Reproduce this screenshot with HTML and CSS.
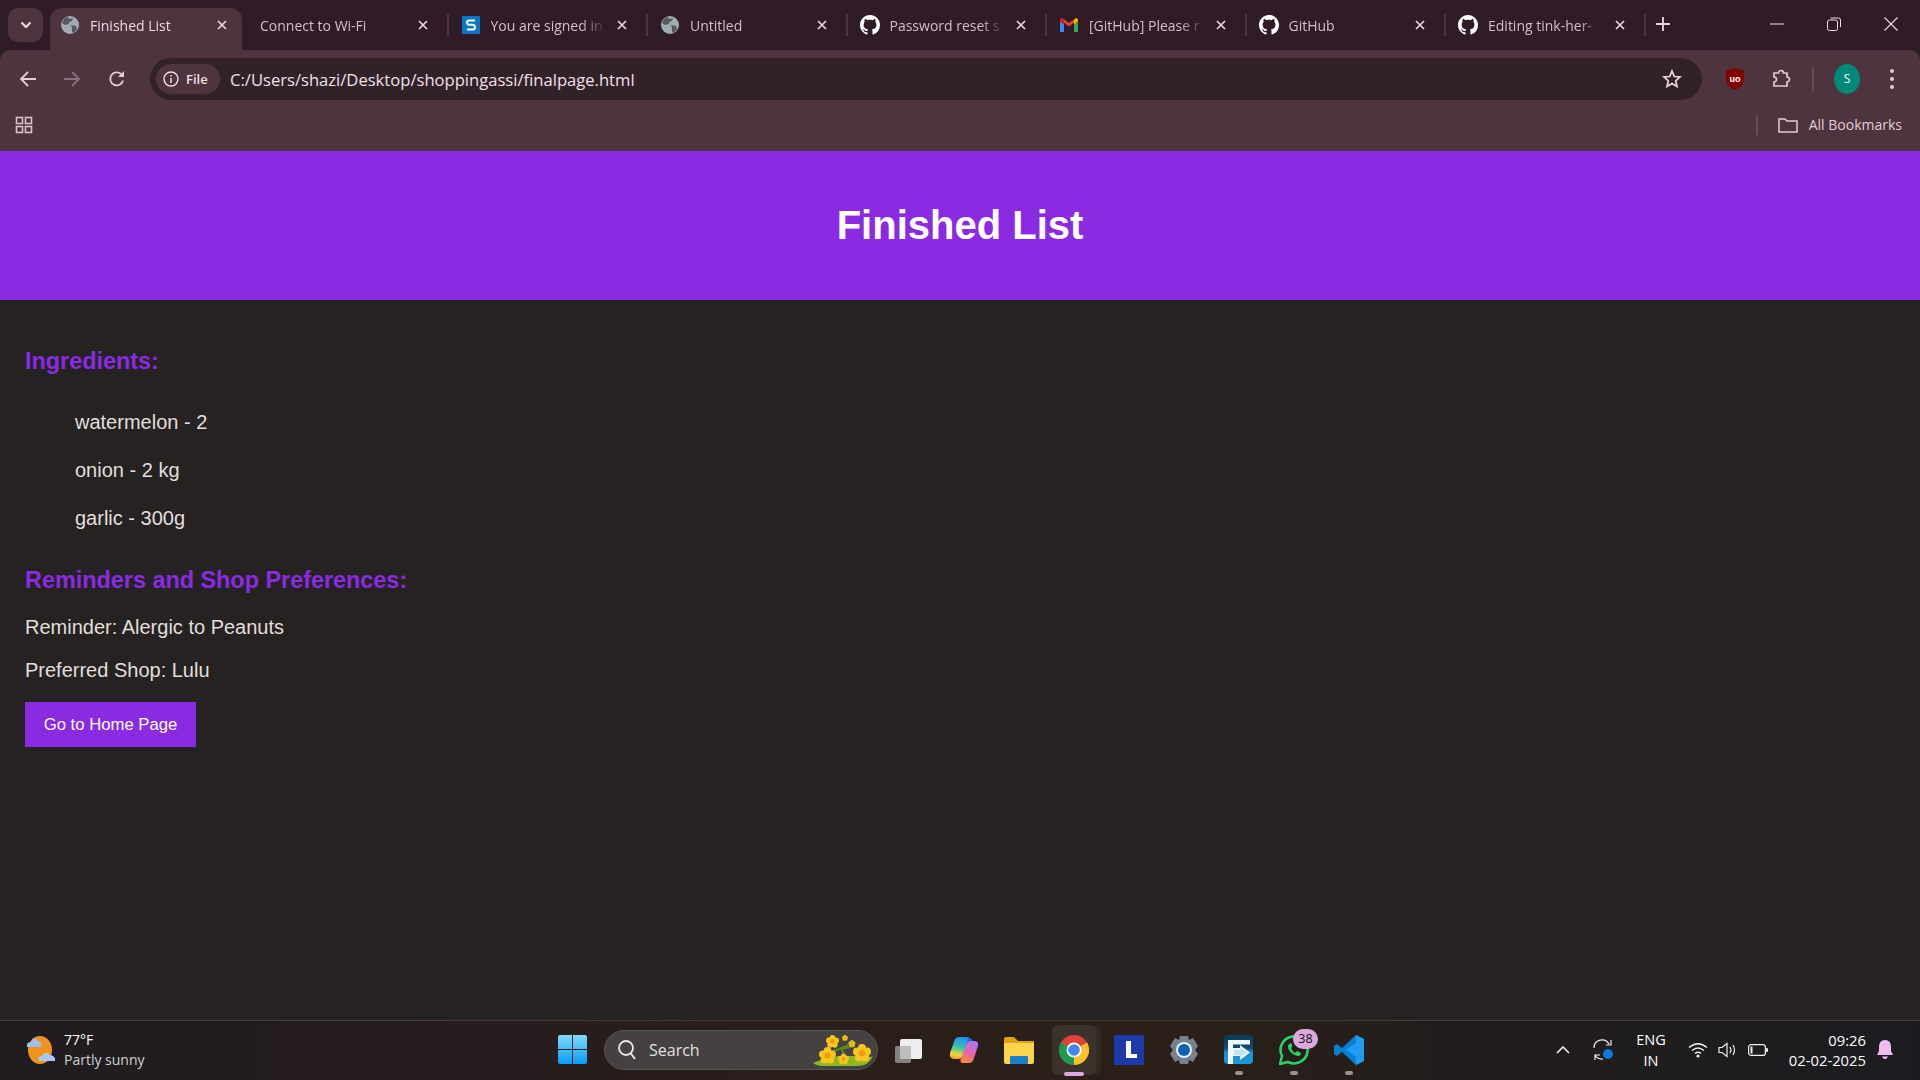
FILE: index.html
```html
<!DOCTYPE html>
<html lang="en">
<head>
    <meta charset="UTF-8">
    <title>Finished List</title>
    <link rel="stylesheet" href="styles.css">
</head>
<body>
    <svg class="defs" width="0" height="0">
        <defs>
            <symbol id="globe" viewBox="0 0 18 18">
                <circle cx="9" cy="9" r="9" fill="#a3abb3"/>
                <path d="M6 1 9 3 12 2 11 5 8 6 8 8 4 9 1 7 3 3ZM10 9 15 10 16 13 13 17 11 16 11 12Z" fill="#55595f"/>
            </symbol>
            <symbol id="github" viewBox="0 0 16 16">
                <path fill="#fff" d="M8 0C3.58 0 0 3.58 0 8c0 3.54 2.29 6.53 5.47 7.59.4.07.55-.17.55-.38 0-.19-.01-.82-.01-1.49-2.01.37-2.53-.49-2.69-.94-.09-.23-.48-.94-.82-1.13-.28-.15-.68-.52-.01-.53.63-.01 1.08.58 1.23.82.72 1.21 1.87.87 2.33.66.07-.52.28-.87.51-1.07-1.78-.2-3.64-.89-3.64-3.95 0-.87.31-1.59.82-2.15-.08-.2-.36-1.02.08-2.12 0 0 .67-.21 2.2.82.64-.18 1.32-.27 2-.27.68 0 1.36.09 2 .27 1.53-1.04 2.2-.82 2.2-.82.44 1.1.16 1.92.08 2.12.51.56.82 1.27.82 2.15 0 3.07-1.87 3.75-3.65 3.95.29.25.54.73.54 1.48 0 1.07-.01 1.93-.01 2.2 0 .21.15.46.55.38A8.013 8.013 0 0016 8c0-4.42-3.58-8-8-8z"/>
            </symbol>
            <symbol id="close" viewBox="0 0 12 12">
                <path d="M2 2 10 10M10 2 2 10" stroke="#ecd5df" stroke-width="1.7" fill="none"/>
            </symbol>
            <symbol id="blossom" viewBox="0 0 20 20">
                <g fill="#f7c51e">
                    <circle cx="10" cy="4.500" r="4.500"/><circle cx="15.500" cy="8.500" r="4.500"/><circle cx="13.500" cy="15" r="4.500"/>
                    <circle cx="6.500" cy="15" r="4.500"/><circle cx="4.500" cy="8.500" r="4.500"/>
                </g>
                <circle cx="10" cy="10" r="3.500" fill="#ee9a14"/>
            </symbol>
        </defs>
    </svg>

    <!-- tab strip -->
    <div class="tabstrip">
        <button class="tab-search">
            <svg width="12" height="8" viewBox="0 0 12 8"><path d="M1.5 1.5 6 6 10.500 1.500" stroke="#f0e0e8" stroke-width="2" fill="none"/></svg>
        </button>
        <div class="tab active">
            <svg class="favicon"><use href="#globe"/></svg>
            <span class="tab-title">Finished List</span>
            <svg class="tab-close"><use href="#close"/></svg>
        </div>
        <div class="tab no-icon">
            <span class="tab-title">Connect to Wi-Fi</span>
            <svg class="tab-close"><use href="#close"/></svg>
        </div>
        <div class="tab">
            <svg class="favicon" viewBox="0 0 18 18">
                <rect width="18" height="18" fill="#0a76c4"/>
                <path d="M13 4.500H7.500Q5 4.500 5 6.500T7.500 8.800H10.500Q13 9 13 11.200T10.500 13.500H5" stroke="#fff" stroke-width="2" fill="none"/>
            </svg>
            <span class="tab-title">You are signed in</span>
            <svg class="tab-close"><use href="#close"/></svg>
        </div>
        <div class="tab">
            <svg class="favicon"><use href="#globe"/></svg>
            <span class="tab-title">Untitled</span>
            <svg class="tab-close"><use href="#close"/></svg>
        </div>
        <div class="tab">
            <svg class="favicon gh"><use href="#github"/></svg>
            <span class="tab-title">Password reset s</span>
            <svg class="tab-close"><use href="#close"/></svg>
        </div>
        <div class="tab">
            <svg class="favicon" viewBox="0 0 18 14">
                <path d="M0 3V14H4V6.500Z" fill="#4285f4"/>
                <path d="M14 6.500V14H18V3Z" fill="#34a853"/>
                <path d="M0 1.500 9 8.500 18 1.500 16 0 9 5 2 0Z" fill="#ea4335"/>
                <path d="M14 2.500 16 0 18 1.500V3L14 6.500Z" fill="#fbbc04"/>
                <path d="M0 1.500 2 0 4 2.500V6.500L0 3Z" fill="#c5221f"/>
            </svg>
            <span class="tab-title">[GitHub] Please r</span>
            <svg class="tab-close"><use href="#close"/></svg>
        </div>
        <div class="tab">
            <svg class="favicon gh"><use href="#github"/></svg>
            <span class="tab-title">GitHub</span>
            <svg class="tab-close"><use href="#close"/></svg>
        </div>
        <div class="tab last">
            <svg class="favicon gh"><use href="#github"/></svg>
            <span class="tab-title">Editing tink-her-</span>
            <svg class="tab-close"><use href="#close"/></svg>
        </div>
        <button class="new-tab">
            <svg width="14" height="14" viewBox="0 0 14 14"><path d="M7 0V14M0 7H14" stroke="#ecd5df" stroke-width="1.800"/></svg>
        </button>
        <div class="window-controls">
            <svg width="14" height="14" viewBox="0 0 14 14"><path d="M0 7H14" stroke="#f0e0e8"/></svg>
            <svg width="14" height="14" viewBox="0 0 14 14"><rect x="0.500" y="3" width="10" height="10.500" rx="2" stroke="#f0e0e8" fill="none"/><path d="M3.500 1H11.500Q13.500 1 13.500 3V10" stroke="#f0e0e8" fill="none"/></svg>
            <svg width="14" height="14" viewBox="0 0 14 14"><path d="M0.500 0.500 13.500 13.500M13.500 0.500 0.500 13.500" stroke="#f0e0e8" stroke-width="1.100"/></svg>
        </div>
    </div>

    <!-- address bar -->
    <div class="toolbar">
        <button class="tool-btn">
            <svg width="18" height="18" viewBox="0 0 18 18"><path d="M17 9H2M9 2 2 9 9 16" stroke="#e3ccd6" stroke-width="1.800" fill="none"/></svg>
        </button>
        <button class="tool-btn">
            <svg width="18" height="18" viewBox="0 0 18 18"><path d="M1 9H16M9 2 16 9 9 16" stroke="#87707b" stroke-width="1.800" fill="none"/></svg>
        </button>
        <button class="tool-btn reload">
            <svg width="18" height="18" viewBox="0 0 18 18"><path d="M15 10.500A6.500 6.500 0 1 1 13 4L15 6" stroke="#e3ccd6" stroke-width="1.800" fill="none"/><path d="M16 1V7H10Z" fill="#e3ccd6"/></svg>
        </button>
        <div class="omnibox">
            <div class="file-chip">
                <svg width="16" height="16" viewBox="0 0 16 16"><circle cx="8" cy="8" r="7" stroke="#f0e0e8" stroke-width="1.400" fill="none"/><path d="M8 7V12M8 4V5.600" stroke="#f0e0e8" stroke-width="1.500"/></svg>
                <span>File</span>
            </div>
            <span class="url">C:/Users/shazi/Desktop/shoppingassi/finalpage.html</span>
            <svg class="star" width="20" height="20" viewBox="0 0 20 20"><path d="M10 2 12.300 7.500 18 8 13.700 11.800 15 17.500 10 14.500 5 17.500 6.300 11.800 2 8 7.700 7.500Z" stroke="#ecd5df" stroke-width="1.700" fill="none"/></svg>
        </div>
        <div class="ext">
            <svg width="18" height="22" viewBox="0 0 18 22"><path d="M9 0 18 3V11Q18 18 9 22 0 18 0 11V3Z" fill="#800000"/><text x="9" y="13.500" class="ublock">uo</text></svg>
        </div>
        <div class="ext">
            <svg width="20" height="20" viewBox="0 0 20 20"><path d="M3 4H7.500A2.500 2.500 0 0 1 12.500 4H16V8A2.500 2.500 0 0 1 16 13V17H3V13A2.500 2.500 0 0 0 3 8Z" stroke="#e3ccd6" stroke-width="1.700" fill="none"/></svg>
        </div>
        <span class="tool-sep"></span>
        <div class="avatar">S</div>
        <div class="menu-dots"><i></i><i></i><i></i></div>
    </div>

    <!-- bookmarks bar -->
    <div class="bookmarks">
        <svg width="18" height="18" viewBox="0 0 18 18" class="apps">
            <g stroke="#d8c2cc" stroke-width="1.600" fill="none">
                <rect x="1.500" y="1.500" width="6" height="6"/><rect x="10.500" y="1.500" width="6" height="6"/>
                <rect x="1.500" y="10.500" width="6" height="6"/><rect x="10.500" y="10.500" width="6" height="6"/>
            </g>
        </svg>
        <span class="bm-sep"></span>
        <svg width="20" height="16" viewBox="0 0 20 16"><path d="M1 14V2H7L9 4H19V15H1Z" stroke="#e3ccd6" stroke-width="1.500" fill="none"/></svg>
        <span class="bm-label">All Bookmarks</span>
    </div>

    <!-- page -->
    <header class="page-header">
        <h1>Finished List</h1>
    </header>
    <main class="content">
        <h2>Ingredients:</h2>
        <ul class="items">
            <li>watermelon - 2</li>
            <li>onion - 2 kg</li>
            <li>garlic - 300g</li>
        </ul>
        <h2>Reminders and Shop Preferences:</h2>
        <p>Reminder: Alergic to Peanuts</p>
        <p>Preferred Shop: Lulu</p>
        <button class="home-btn">Go to Home Page</button>
    </main>

    <!-- taskbar -->
    <footer class="taskbar">
        <div class="weather">
            <svg width="31" height="30" viewBox="0 0 31 30">
                <ellipse cx="15" cy="15" rx="12" ry="14" fill="#f0931c"/>
                <path d="M2 12Q1 7 6 7 9 0 13 6 18 7 16 12Z" fill="#9fc0ee"/>
                <path d="M14 26Q12 21 17 21 21 15 25 20 31 21 30 26Z" fill="#a9c8f2"/>
            </svg>
            <div class="weather-text">
                <span class="temp">77°F</span>
                <span class="cond">Partly sunny</span>
            </div>
        </div>
        <svg class="start" width="29" height="29" viewBox="0 0 29 29">
            <defs>
                <linearGradient id="win" x1="0" y1="0" x2="0" y2="1"><stop offset="0" stop-color="#7fdcfb"/><stop offset="1" stop-color="#0a9cf5"/></linearGradient>
            </defs>
            <path d="M0 2Q0 0 2 0H14V14H0ZM15 0H27Q29 0 29 2V14H15ZM0 15H14V29H2Q0 29 0 27ZM15 15H29V27Q29 29 27 29H15Z" fill="url(#win)"/>
        </svg>
        <div class="search">
            <svg width="20" height="22" viewBox="0 0 20 22"><circle cx="9" cy="9" r="7" stroke="#e8e8e8" stroke-width="1.800" fill="none"/><path d="M13.500 14 18 20" stroke="#e8e8e8" stroke-width="2"/></svg>
            <span>Search</span>
            <svg class="flowers" width="62" height="32" viewBox="0 0 62 32">
                <path d="M0 29Q20 20 40 22T60 22Q56 32 44 32H10Q4 32 0 29Z" fill="#8db822"/>
                <path d="M18 18 34 12 38 7M28 15 34 24M28 15 42 12" stroke="#5c8a1c" stroke-width="2" fill="none"/>
                <use href="#blossom" x="6" y="13" width="17" height="17"/>
                <use href="#blossom" x="13" y="1" width="13" height="13"/>
                <use href="#blossom" x="40" y="10" width="18" height="18"/>
                <use href="#blossom" x="25" y="19" width="11" height="12"/>
                <use href="#blossom" x="29" y="0" width="6" height="8"/>
                <use href="#blossom" x="35" y="6" width="8" height="7"/>
            </svg>
        </div>
        <div class="apps-row">
            <div class="app">
                <svg width="30" height="30" viewBox="0 0 30 30"><rect x="6" y="4" width="22" height="20" rx="2" fill="#eeeeee"/><rect x="1" y="11" width="16" height="17" rx="2" fill="#8d8d8d" opacity=".9"/><rect x="6" y="11" width="11" height="13" fill="#bdbdbd"/></svg>
            </div>
            <div class="app">
                <svg width="30" height="28" viewBox="0 0 30 28">
                    <defs>
                        <linearGradient id="cpA" x1="0.500" y1="0" x2="0.300" y2="1"><stop offset="0" stop-color="#2a8cf0"/><stop offset=".45" stop-color="#35c6a8"/><stop offset=".8" stop-color="#f0d23a"/><stop offset="1" stop-color="#f0a030"/></linearGradient>
                        <linearGradient id="cpB" x1="0.700" y1="0" x2="0.300" y2="1"><stop offset="0" stop-color="#a878f0"/><stop offset=".5" stop-color="#e860b8"/><stop offset="1" stop-color="#f58a3c"/></linearGradient>
                    </defs>
                    <path d="M19 1Q23 2 24 6L13 6Q10 6 9 9Z" fill="#2466d8"/>
                    <path d="M10 1H17Q20 1 19 4L14 19Q13 23 9 23H6Q0 23 1 17L5 6Q6 1 10 1Z" fill="url(#cpA)"/>
                    <path d="M11 22Q14 24 17 21L20 20 17 27H14Q11 27 11 22Z" fill="#e8383c"/>
                    <path d="M20 27H14Q11 27 12 24L17 9Q18 5 22 5H25Q30 5 29 10L25 22Q24 27 20 27Z" fill="url(#cpB)"/>
                </svg>
            </div>
            <div class="app">
                <svg width="30" height="28" viewBox="0 0 30 28"><path d="M0 3Q0 1 2 1H10L14 5H30V12H0Z" fill="#e2a312"/><path d="M0 7H30V26Q30 28 28 28H2Q0 28 0 26Z" fill="#fcd34c"/><rect x="6" y="20" width="18" height="8" rx="1" fill="#1a7fc9"/></svg>
            </div>
            <div class="app running">
                <svg width="30" height="30" viewBox="0 0 30 30">
                    <circle cx="15" cy="15" r="15" fill="#db4437"/>
                    <path d="M15 15 2 7.500A15 15 0 0 0 15 30Z" fill="#1c9a4f"/>
                    <path d="M15 15 15 30A15 15 0 0 0 28 7.500Z" fill="#fbc02d"/>
                    <circle cx="15" cy="15" r="7.500" fill="#fff"/>
                    <circle cx="15" cy="15" r="5.800" fill="#4285f4"/>
                </svg>
            </div>
            <div class="app">
                <svg width="30" height="30" viewBox="0 0 30 30"><rect width="30" height="30" fill="#1e3aa8"/><path d="M12 6H17V19H23V23H12Z" fill="#fff"/></svg>
            </div>
            <div class="app">
                <svg width="30" height="30" viewBox="0 0 30 30"><path d="M11 1H19L20 5 24 3 29 11 26 15 29 19 24 27 20 25 19 29H11L10 25 6 27 1 19 4 15 1 11 6 3 10 5Z" fill="#75818d"/><circle cx="15" cy="15" r="8" fill="#e8eef4"/><circle cx="15" cy="15" r="6" fill="#0f62b0"/></svg>
            </div>
            <div class="app dot">
                <svg width="29" height="29" viewBox="0 0 29 29">
                    <defs>
                        <linearGradient id="rem" x1="0" y1="0" x2="0" y2="1"><stop offset="0" stop-color="#0c3b58"/><stop offset=".45" stop-color="#0c4c70"/><stop offset=".6" stop-color="#1c8fd0"/><stop offset="1" stop-color="#1c9adf"/></linearGradient>
                    </defs>
                    <rect width="29" height="29" rx="4" fill="url(#rem)"/>
                    <path d="M4 29V5H26V9.500H9V13H16V10L26 17.500 16 25V21H9V29Z" fill="#f2f7fb"/>
                    <path d="M16 15V13L23 17.500 16 22V20H10V15Z" fill="#9fd4f2" opacity=".6"/>
                </svg>
            </div>
            <div class="app dot">
                <svg width="30" height="30" viewBox="0 0 30 30"><path d="M1 29 3 21A13.500 13.500 0 1 1 9 27Z" stroke="#25d366" stroke-width="2.600" fill="none"/><path d="M10 9Q8 11 10 15 13 20 19 21 22 21 22 18L18 16 16 18Q13 16 12 13L13.500 11 12 8Z" fill="#25d366"/></svg>
                <span class="badge">38</span>
            </div>
            <div class="app dot">
                <svg width="30" height="30" viewBox="0 0 30 30"><path d="M22 0 30 4V26L22 30 8 17 3 21 0 19V11L3 9 8 13Z" fill="#0a7fd0"/><path d="M22 0 30 4V26L22 30 22 8 12 15 22 22Z" fill="#1f9cf0"/></svg>
            </div>
        </div>
        <div class="tray">
            <svg width="14" height="8" viewBox="0 0 14 8"><path d="M1 7 7 1 13 7" stroke="#eee" stroke-width="1.600" fill="none"/></svg>
            <svg class="sync" width="22" height="22" viewBox="0 0 22 22"><path d="M2 9A8 8 0 0 1 17 5M19 1V6H14M3 21 3 16H8M3 16A8 8 0 0 0 11 20" stroke="#eee" stroke-width="1.200" fill="none"/><circle cx="16" cy="15" r="5" fill="#0a78d7"/></svg>
            <div class="lang"><span>ENG</span><span>IN</span></div>
            <svg class="wifi" width="20" height="16" viewBox="0 0 20 16"><path d="M1 5.500Q10-2 19 5.500M4 8.500Q10 3.500 16 8.500M7 11.500Q10 9 13 11.500" stroke="#eee" stroke-width="1.500" fill="none"/><circle cx="10" cy="14" r="1.600" fill="#eee"/></svg>
            <svg class="vol" width="20" height="16" viewBox="0 0 20 16"><path d="M1 5.500H4L9 1.500V14.500L4 10.500H1Z" stroke="#eee" stroke-width="1.200" fill="none"/><path d="M12 5Q14 8 12 11M15 3Q18 8 15 13" stroke="#eee" stroke-width="1.200" fill="none"/></svg>
            <svg class="batt" width="20" height="12" viewBox="0 0 20 12"><rect x="0.600" y="0.600" width="16.800" height="10.800" rx="2.500" stroke="#eee" stroke-width="1.200" fill="none"/><rect x="2.500" y="2.500" width="2" height="7" fill="#eee"/><rect x="18" y="4" width="2" height="4" rx="1" fill="#eee"/></svg>
            <div class="clock"><span>09:26</span><span>02-02-2025</span></div>
            <svg class="bell" width="16" height="20" viewBox="0 0 16 20"><path d="M8 0Q14 0 14 7V11L16 15H0L2 11V7Q2 0 8 0Z" fill="#eebcee"/><path d="M5 16.500H11Q10 19 8 19T5 16.500Z" fill="#eebcee"/></svg>
        </div>
    </footer>
</body>
</html>
```

FILE: styles.css
```css
* {
    box-sizing: border-box;
}
html, body {
    height: 100%;
}
body {
    margin: 0;
    height: 1080px;
    display: flex;
    flex-direction: column;
    overflow: hidden;
    background: #262222;
    font-family: 'Liberation Sans', Arial, sans-serif;
}
button {
    font-family: inherit;
    border: none;
    background: none;
    padding: 0;
}
.defs {
    position: absolute;
}

/* tab strip */
.tabstrip {
    height: 50px;
    flex: none;
    display: flex;
    align-items: flex-end;
    padding-left: 8px;
    background: #2f1c26;
    font-family: 'Open Sans', sans-serif;
}
.tab-search {
    width: 35px;
    height: 34px;
    margin: 0 7px 8px 0;
    border-radius: 10px;
    background: #4d343f;
    display: flex;
    align-items: center;
    justify-content: center;
}
.tab {
    position: relative;
    width: 199.5px;
    height: 42px;
    flex: none;
    display: flex;
    align-items: center;
    padding: 0 20px 8px 13px;
    font-size: 14px;
    color: #d9bcc8;
}
.tab.no-icon {
    padding-left: 11px;
}
.tab::after {
    content: '';
    position: absolute;
    right: 0;
    top: 6px;
    height: 22px;
    width: 2px;
    background: #4d343f;
}
.tab.active {
    width: 192px;
    margin-right: 7px;
    padding-left: 11px;
    padding-right: 14px;
    background: #4d343f;
    border-radius: 12px 12px 0 0;
    color: #ecd8e1;
}
.tab.active::after {
    display: none;
}
.favicon {
    width: 18px;
    height: 18px;
    flex: none;
    margin-right: 11px;
}
.favicon.gh {
    width: 20px;
    height: 20px;
    margin-right: 10px;
    margin-left: -1px;
}
.tab-title {
    flex: 1;
    overflow: hidden;
    white-space: nowrap;
    -webkit-mask-image: linear-gradient(to right, #000 78%, transparent 100%);
    mask-image: linear-gradient(to right, #000 78%, transparent 100%);
}
.tab-close {
    width: 12px;
    height: 12px;
    flex: none;
    margin-left: 10px;
}
.new-tab {
    width: 36px;
    height: 34px;
    margin: 0 0 9px -1px;
    display: flex;
    align-items: center;
    justify-content: center;
}
.window-controls {
    margin-left: auto;
    width: 172px;
    height: 50px;
    padding: 0 22px 2px 22px;
    display: flex;
    align-items: center;
    justify-content: space-between;
    align-self: flex-start;
}

/* toolbar */
.toolbar {
    height: 50px;
    flex: none;
    display: flex;
    align-items: flex-start;
    padding: 8px 26px 0 6px;
    background: #4d343f;
    border-radius: 10px 10px 0 0;
}
.tool-btn {
    width: 44px;
    height: 42px;
    flex: none;
    display: flex;
    align-items: center;
    justify-content: center;
}
.tool-btn.reload {
    padding-left: 2px;
}
.omnibox {
    flex: 1;
    height: 42px;
    margin-left: 12px;
    margin-right: 10px;
    padding: 0 20px 0 6px;
    display: flex;
    align-items: center;
    border-radius: 21px;
    background: #33212a;
}
.file-chip {
    height: 30px;
    width: 64px;
    flex: none;
    display: flex;
    align-items: center;
    gap: 7px;
    padding-left: 7px;
    border-radius: 15px;
    background: #4d343f;
    color: #f0e0e8;
    font: 600 13px 'Open Sans', sans-serif;
}
.url {
    margin-left: 10px;
    flex: 1;
    color: #f0e0e8;
    font: 16.600px 'Open Sans', sans-serif;
}
.ext {
    width: 46px;
    height: 42px;
    flex: none;
    display: flex;
    align-items: center;
    justify-content: center;
}
.ublock {
    font: bold 9px 'Liberation Sans', sans-serif;
    fill: #fff;
    text-anchor: middle;
}
.tool-sep {
    width: 2px;
    height: 24px;
    margin: 9px 0 0 8px;
    background: #654c57;
    flex: none;
}
.avatar {
    width: 26px;
    height: 30px;
    margin: 6px 0 0 20px;
    flex: none;
    border-radius: 50%;
    background: #00897b;
    color: #fff;
    font: 12px/30px 'Open Sans', sans-serif;
    text-align: center;
}
.menu-dots {
    width: 4px;
    height: 20px;
    margin: 11px 0 0 30px;
    flex: none;
    display: flex;
    flex-direction: column;
    justify-content: space-between;
}
.menu-dots i {
    display: block;
    width: 4px;
    height: 4px;
    border-radius: 50%;
    background: #e3ccd6;
}

/* bookmarks */
.bookmarks {
    height: 51px;
    flex: none;
    display: flex;
    align-items: center;
    padding: 0 18px 2px 15px;
    background: #4d343f;
    color: #e3ccd6;
    font: 14px 'Open Sans', sans-serif;
}
.bm-sep {
    width: 2px;
    height: 20px;
    margin: 0 20px 0 auto;
    background: #654c57;
}
.bm-label {
    margin-left: 11px;
}

/* page */
.page-header {
    height: 149px;
    flex: none;
    display: flex;
    align-items: center;
    justify-content: center;
    background: #8a2be2;
}
.page-header h1 {
    margin: 0;
    color: #fff;
    font-size: 40px;
    font-weight: bold;
}
.content {
    flex: 1;
    padding: 47px 25px 0;
    color: #e2dede;
    font-size: 20px;
}
.content h2 {
    margin: 0;
    color: #8a2be2;
    font-size: 23.400px;
    line-height: 28px;
}
.items {
    list-style: none;
    margin: 0;
    padding: 35px 0 0 50px;
}
.items li {
    line-height: 24px;
    margin-bottom: 24px;
}
.items + h2 {
    margin-top: 36px;
}
.content p {
    margin: 21px 0 0;
    line-height: 24px;
}
.content p + p {
    margin-top: 19px;
}
.home-btn {
    display: block;
    width: 171px;
    height: 45px;
    margin-top: 20px;
    background: #8a2be2;
    color: #fff;
    font-size: 16.700px;
}

/* taskbar */
.taskbar {
    height: 60px;
    flex: none;
    display: flex;
    align-items: center;
    padding: 0 0 2px 25px;
    border-top: 1px solid #403d3c;
    background: linear-gradient(to right, #1f1c20 0%, #271c1e 25%, #2b1e1a 45%, #2a2018 62%, #221d1d 75%, #1c1c20 100%);
    font-family: 'Open Sans', sans-serif;
    color: #fff;
}
.weather {
    width: 533px;
    flex: none;
    display: flex;
    align-items: center;
    gap: 8px;
}
.weather-text {
    display: flex;
    flex-direction: column;
    font-size: 14px;
    line-height: 20px;
}
.cond {
    color: #d0d0d0;
}
.start {
    flex: none;
}
.search {
    width: 274px;
    height: 40px;
    margin-left: 17px;
    flex: none;
    display: flex;
    align-items: center;
    gap: 12px;
    padding: 0 2px 0 12px;
    border-radius: 20px;
    border: 1px solid #555;
    background: #444140;
    color: #e0e0e0;
    font-size: 16px;
}
.flowers {
    margin-left: auto;
}
.apps-row {
    display: flex;
    margin-left: 3px;
    height: 50px;
}
.app {
    position: relative;
    width: 55px;
    height: 50px;
    flex: none;
    display: flex;
    align-items: center;
    justify-content: center;
}
.app.running {
    width: 44px;
    margin: 0 5.500px;
    border-radius: 6px;
    background: #3a322b;
    box-shadow: 6px 0 0 -1px #312a24;
}
.app.running::after, .app.dot::after {
    content: '';
    position: absolute;
    left: 50%;
    bottom: -1px;
    width: 20px;
    height: 4px;
    margin-left: -10px;
    border-radius: 2px;
    background: #dba8e0;
}
.app.dot::after {
    width: 8px;
    margin-left: -4px;
    bottom: 0;
    background: #9a9590;
}
.badge {
    position: absolute;
    top: 4px;
    right: 3px;
    width: 25px;
    height: 20px;
    border-radius: 10px;
    background: #dba8e0;
    color: #111;
    font-size: 12.500px;
    line-height: 20px;
    text-align: center;
}
.tray {
    margin-left: auto;
    display: flex;
    align-items: center;
    padding-right: 27px;
}
.sync {
    margin-left: 22px;
}
.lang {
    width: 44px;
    margin-left: 15px;
    display: flex;
    flex-direction: column;
    align-items: center;
    font-size: 14.500px;
    line-height: 21px;
}
.wifi {
    margin-left: 15px;
}
.vol {
    margin-left: 10px;
}
.batt {
    margin-left: 10px;
}
.clock {
    width: 88px;
    margin-left: 10px;
    display: flex;
    flex-direction: column;
    align-items: flex-end;
    font-size: 14.800px;
    line-height: 20px;
}
.bell {
    margin-left: 11px;
}
```
